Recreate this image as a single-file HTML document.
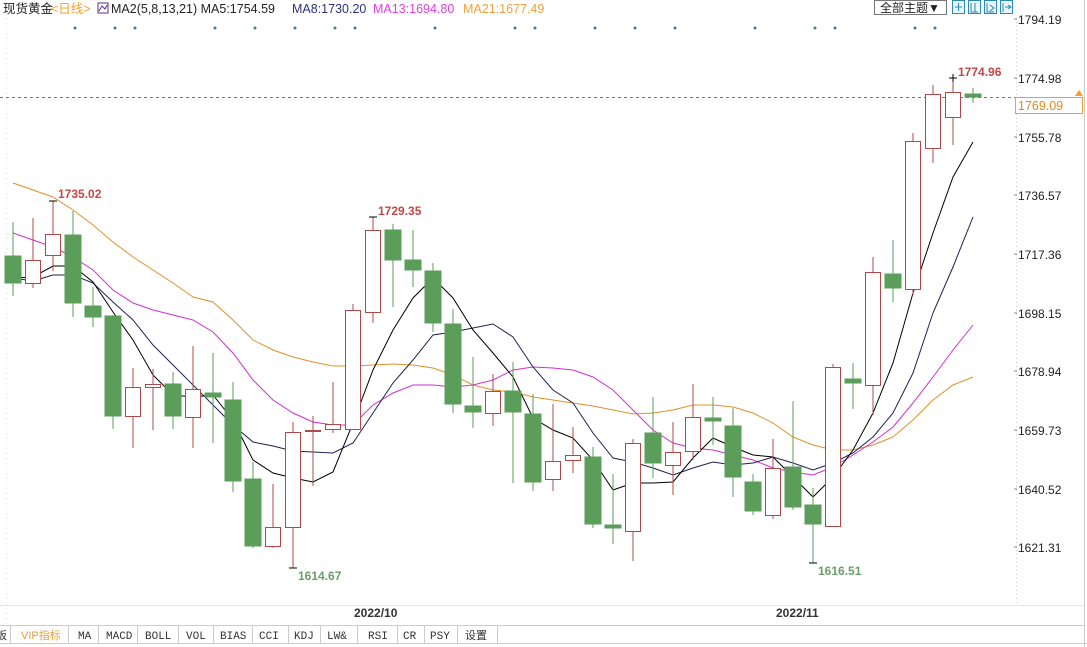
<!DOCTYPE html>
<html><head><meta charset="utf-8"><style>
html,body{margin:0;padding:0;background:#fff;width:1087px;height:647px;overflow:hidden;font-family:"Liberation Sans","Noto Sans CJK SC",sans-serif}
</style></head><body>
<svg width="1087" height="647" xmlns="http://www.w3.org/2000/svg" style="position:absolute;left:0;top:0">
<rect width="1087" height="647" fill="#fff"/>
<!-- header -->
<text x="3" y="13" font-size="12.5" fill="#222" font-family="Liberation Sans,Noto Sans CJK SC,sans-serif">现货黄金</text>
<text x="51" y="13" font-size="12.5" fill="#f0a030" font-family="Liberation Sans,Noto Sans CJK SC,sans-serif">&lt;日线&gt;</text>
<rect x="98" y="3" width="10" height="10" fill="none" stroke="#603080" stroke-width="1"/>
<path d="M99 11 L102 6 L105 9 L107 5" stroke="#603080" fill="none"/>
<text x="111" y="13" font-size="12.5" fill="#222">MA2(5,8,13,21) MA5:1754.59</text>
<text x="292" y="13" font-size="12.5" fill="#303080">MA8:1730.20</text>
<text x="373" y="13" font-size="12.5" fill="#e040e0">MA13:1694.80</text>
<text x="463" y="13" font-size="12.5" fill="#f0a040">MA21:1677.49</text>
<!-- top right buttons -->
<rect x="874.5" y="0.5" width="72" height="14" fill="#fff" stroke="#777"/>
<text x="880" y="12" font-size="12" fill="#222" font-family="Liberation Sans,Noto Sans CJK SC,sans-serif">全部主题▼</text>
<g fill="#eaf6fb" stroke="#2a8ab0"><rect x="952.5" y="0.5" width="12" height="13"/><rect x="968.5" y="0.5" width="12" height="13"/><rect x="984.5" y="0.5" width="12" height="13"/><rect x="1000.5" y="0.5" width="12" height="13"/></g>
<g stroke="#2a8ab0" fill="none"><path d="M958.5 3v8M955 7h7"/><path d="M971 3v9h7M975 3v9"/><path d="M987 3v9h7M990 5l4 3-4 3"/><path d="M1003 3v9M1005 7h6M1008 5l3 2-3 2"/></g>
<!-- dots -->
<g fill="#4a7a9a">
<circle cx="75" cy="28" r="1.5"/><circle cx="115" cy="28" r="1.5"/><circle cx="135" cy="28" r="1.5"/><circle cx="215" cy="28" r="1.5"/><circle cx="255" cy="28" r="1.5"/><circle cx="295" cy="28" r="1.5"/><circle cx="335" cy="28" r="1.5"/><circle cx="355" cy="28" r="1.5"/><circle cx="435" cy="28" r="1.5"/><circle cx="515" cy="28" r="1.5"/><circle cx="535" cy="28" r="1.5"/><circle cx="595" cy="28" r="1.5"/><circle cx="635" cy="28" r="1.5"/><circle cx="675" cy="28" r="1.5"/><circle cx="755" cy="28" r="1.5"/><circle cx="815" cy="28" r="1.5"/><circle cx="835" cy="28" r="1.5"/><circle cx="915" cy="28" r="1.5"/><circle cx="935" cy="28" r="1.5"/>
</g>
<!-- axis -->
<line x1="1016.5" y1="18" x2="1016.5" y2="605" stroke="#ccc" stroke-dasharray="1,3"/>
<line x1="1084.5" y1="0" x2="1084.5" y2="647" stroke="#ccc"/>
<line x1="0" y1="605.5" x2="1084" y2="605.5" stroke="#e4e4e4"/>
<line x1="0" y1="625.5" x2="1084" y2="625.5" stroke="#ccc"/>
<line x1="0" y1="643.5" x2="1087" y2="643.5" stroke="#ccc"/>
<line x1="6.5" y1="18" x2="6.5" y2="625" stroke="#ddd" stroke-dasharray="1,4"/>
<g font-size="12" fill="#222">
<text x="1018" y="24">1794.19</text><text x="1018" y="83">1774.98</text><text x="1018" y="142">1755.78</text><text x="1018" y="200">1736.57</text><text x="1018" y="259">1717.36</text><text x="1018" y="318">1698.15</text><text x="1018" y="376">1678.94</text><text x="1018" y="435">1659.73</text><text x="1018" y="494">1640.52</text><text x="1018" y="552">1621.31</text>
</g>
<g stroke="#888"><path d="M1014 19h3M1014 78h3M1014 137h3M1014 195h3M1014 254h3M1014 313h3M1014 371h3M1014 430h3M1014 489h3M1014 547h3"/></g>
<line x1="0" y1="97.5" x2="1084" y2="97.5" stroke="#3a8aa8" stroke-dasharray="3,3"/>
<rect x="1015.5" y="97.5" width="67" height="16" fill="#fff" stroke="#f0a030"/>
<text x="1018" y="110" font-size="12.5" fill="#e08a20">1769.09</text>
<path d="M1075 96l4-6 4 6z" fill="#f0a030"/>
<text x="354" y="617" font-size="12" font-weight="bold" fill="#333">2022/10</text>
<text x="776" y="617" font-size="12" font-weight="bold" fill="#333">2022/11</text>
<!-- MAs -->
<g fill="none" stroke-width="1">
<polyline stroke="#e0902a" points="13,183 33,190 53,197 73,210 93,225 113,242 133,257 153,270 173,283 193,297 213,302 233,320 253,340 273,350 293,357 313,362 333,366 353,366 373,365 393,364 413,365 433,368 453,375 473,385 493,390 513,392 533,397 553,400 573,403 593,406 613,410 633,414 653,413 673,410 693,405 713,405 733,407 753,413 773,423 793,437 813,445 833,450 853,450 873,445 893,437 913,420 933,400 953,385 973,377"/>
<polyline stroke="#d030d0" points="13,233 33,240 53,247 73,257 93,270 113,290 133,303 153,310 173,315 193,320 213,332 233,353 253,380 273,400 293,413 313,422 333,425 353,425 373,405 393,393 413,385 433,385 453,387 473,385 493,380 513,370 533,367 553,368 573,370 593,377 613,390 633,410 653,430 673,443 693,448 713,450 733,455 753,460 773,468 793,472 813,475 833,467 853,455 873,442 893,427 913,403 933,377 953,350 973,325"/>
<polyline stroke="#202050" points="13,278 33,281 53,275 73,275 93,283 113,302 133,320 153,345 173,365 193,385 213,405 233,425 253,442 273,446 293,451 313,452 333,453 353,443 373,413 393,383 413,360 433,335 453,332 473,328 493,324 513,337 533,367 553,390 573,403 593,433 613,458 633,462 653,468 673,475 693,468 713,462 733,465 753,463 773,457 793,463 813,470 833,463 853,453 873,437 893,413 913,373 933,313 953,267 973,217"/>
<polyline stroke="#000" points="13,278 33,277 53,266 73,266 93,282 113,312 133,340 153,375 173,395 193,397 213,395 233,420 253,460 273,473 293,478 313,482 333,472 353,423 373,370 393,330 413,298 433,278 453,298 473,330 493,353 513,377 533,418 553,430 573,438 593,460 613,490 633,483 653,483 673,482 693,458 713,438 733,447 753,455 773,457 793,477 813,497 833,477 853,450 873,413 893,363 913,293 933,233 953,177 973,142"/>
</g>
<!-- candles -->
<g stroke-width="1" shape-rendering="crispEdges">
<!-- green: wick line + filled body -->
<g stroke="#5a9e5a" fill="#5a9e5a">
<path d="M13 222V296M73 211V317M93 287V327M113 315V429M173 372V429M213 353V443M233 382V492M253 462V548M393 224V307M413 230V287M433 263V332M453 309V413M473 357V428M513 362V483M533 394V491M593 447V528M613 474V544M653 397V478M713 397V445M733 408V497M753 474V515M793 401V510M813 488V563M853 363V409M893 240V302M973 88V103"/>
<rect x="5" y="256" width="16" height="27"/><rect x="65" y="235" width="16" height="68"/><rect x="85" y="306" width="16" height="11"/><rect x="105" y="316" width="16" height="100"/><rect x="165" y="384" width="16" height="32"/><rect x="205" y="393" width="16" height="4"/><rect x="225" y="400" width="16" height="81"/><rect x="245" y="479" width="16" height="67"/><rect x="385" y="230" width="16" height="30"/><rect x="405" y="260" width="16" height="10"/><rect x="425" y="271" width="16" height="52"/><rect x="445" y="324" width="16" height="80"/><rect x="465" y="406" width="16" height="6"/><rect x="505" y="391" width="16" height="21"/><rect x="525" y="414" width="16" height="68"/><rect x="585" y="457" width="16" height="67"/><rect x="605" y="525" width="16" height="3"/><rect x="645" y="433" width="16" height="30"/><rect x="705" y="418" width="16" height="3"/><rect x="725" y="426" width="16" height="51"/><rect x="745" y="482" width="16" height="29"/><rect x="785" y="467" width="16" height="40"/><rect x="805" y="505" width="16" height="19"/><rect x="845" y="379" width="16" height="4"/><rect x="885" y="274" width="16" height="14"/><rect x="965" y="94" width="16" height="3"/>
</g>
<g stroke="#b04848" fill="#fff">
<path d="M33 218V288M53 201V271M133 368V448M153 369V430M193 346V448M273 484V548M293 422V568M313 416V486M333 382V433M353 304V430M373 217V323M493 374V426M553 404V491M573 427V473M633 439V561M673 422V495M693 384V460M773 439V519M833 364V526M873 257V415M913 133V295M933 85V163M953 78V145"/>
<rect x="25.5" y="260.5" width="15" height="23"/><rect x="45.5" y="234.5" width="15" height="21"/><rect x="125.5" y="387.5" width="15" height="29"/><rect x="145.5" y="384.5" width="15" height="3"/><rect x="185.5" y="389.5" width="15" height="28"/><rect x="265.5" y="527.5" width="15" height="19"/><rect x="285.5" y="432.5" width="15" height="95"/><rect x="305.5" y="430.5" width="15" height="1"/><rect x="325.5" y="424.5" width="15" height="5"/><rect x="345.5" y="310.5" width="15" height="119"/><rect x="365.5" y="230.5" width="15" height="82"/><rect x="485.5" y="391.5" width="15" height="22"/><rect x="545.5" y="461.5" width="15" height="18"/><rect x="565.5" y="455.5" width="15" height="5"/><rect x="625.5" y="443.5" width="15" height="88"/><rect x="665.5" y="452.5" width="15" height="13"/><rect x="685.5" y="417.5" width="15" height="34"/><rect x="765.5" y="468.5" width="15" height="47"/><rect x="825.5" y="367.5" width="15" height="159"/><rect x="865.5" y="272.5" width="15" height="113"/><rect x="905.5" y="141.5" width="15" height="148"/><rect x="925.5" y="94.5" width="15" height="54"/><rect x="945.5" y="92.5" width="15" height="25"/>
</g>
</g>
<!-- extreme markers -->
<g stroke="#000"><path d="M49 201h8M369 217h8M289 568h8M809 563h8M949 78h8M953 74v8"/></g>
<g font-size="12" font-weight="bold">
<text x="58" y="198" fill="#c04848">1735.02</text>
<text x="378" y="215" fill="#c04848">1729.35</text>
<text x="958" y="76" fill="#c04848">1774.96</text>
<text x="298" y="580" fill="#6a9e6a">1614.67</text>
<text x="818" y="575" fill="#6a9e6a">1616.51</text>
</g>
<!-- tabs -->
<g font-size="11" fill="#333" font-family="Liberation Mono,Noto Sans CJK SC,monospace">
<text x="-4" y="639" font-family="Liberation Sans,Noto Sans CJK SC,sans-serif">板</text>
<text x="21" y="639" fill="#e0a040" font-family="Liberation Sans,Noto Sans CJK SC,sans-serif">VIP指标</text>
<text x="78" y="639">MA</text><text x="106" y="639">MACD</text><text x="145" y="639">BOLL</text><text x="186" y="639">VOL</text><text x="220" y="639">BIAS</text><text x="259" y="639">CCI</text><text x="294" y="639">KDJ</text><text x="327" y="639">LW&amp;</text><text x="368" y="639">RSI</text><text x="403" y="639">CR</text><text x="430" y="639">PSY</text>
<text x="465" y="639" font-family="Liberation Sans,Noto Sans CJK SC,sans-serif">设置</text>
</g>
<g stroke="#ccc"><path d="M10.5 626v17M68.5 626v17M98.5 626v17M137.5 626v17M178.5 626v17M213.5 626v17M252.5 626v17M288.5 626v17M320.5 626v17M357.5 626v17M397.5 626v17M424.5 626v17M457.5 626v17M497.5 626v17"/></g>
</svg>
</body></html>
